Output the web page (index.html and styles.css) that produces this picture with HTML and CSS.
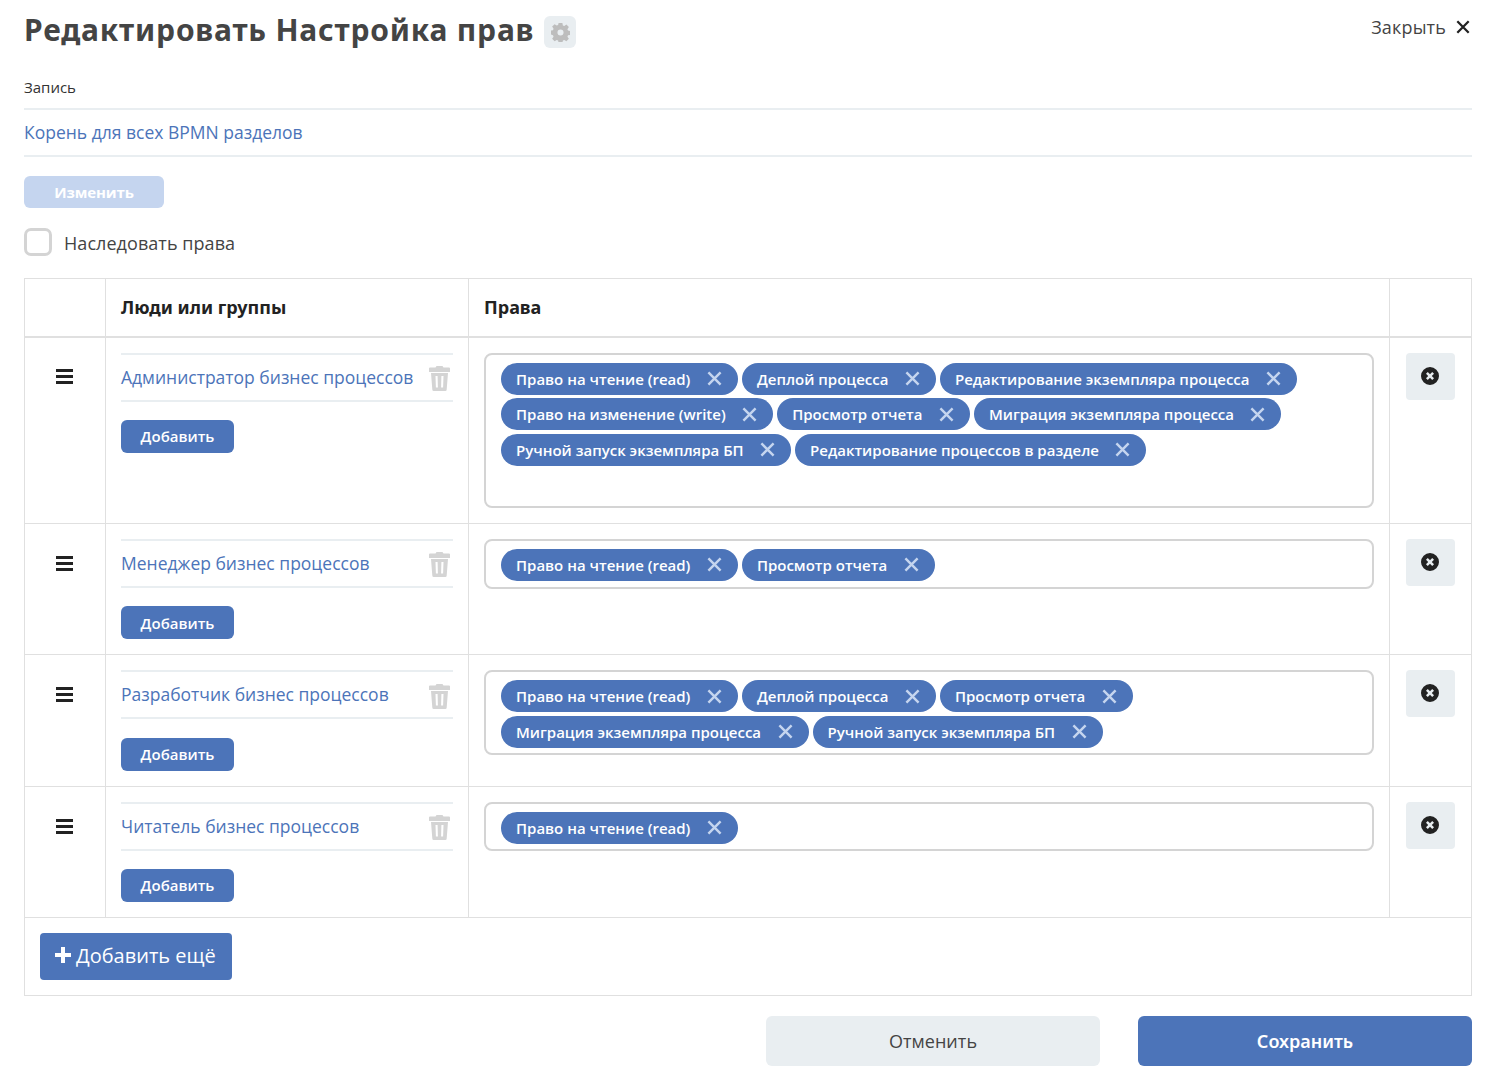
FILE: index.html
```html
<!DOCTYPE html>
<html lang="ru">
<head>
<meta charset="utf-8">
<title>Редактировать Настройка прав</title>
<link rel="stylesheet" href="styles.css">
</head>
<body>
<svg class="defs" width="0" height="0" aria-hidden="true">
  <symbol id="x" viewBox="0 0 16 16"><path d="M1.500 1.500l13 13M14.500 1.500l-13 13" fill="none" stroke="currentColor" stroke-width="2.600"/></symbol>
  <symbol id="trash" viewBox="0 0 21 25"><path fill="currentColor" fill-rule="evenodd" d="M7.500 0h6l1 1.500H20a1 1 0 0 1 1 1V6H0V2.500a1 1 0 0 1 1-1h5.500zM2 7h17l-1.300 16.500a1.500 1.500 0 0 1-1.500 1.500H4.800a1.500 1.500 0 0 1-1.500-1.500zM6.500 10l.4 11.500h2L8.600 10zM12.400 10l-.3 11.500h2l.4-11.500z"/></symbol>
  <symbol id="bars" viewBox="0 0 17 15"><path fill="currentColor" d="M0 0h17v3H0zM0 6h17v3H0zM0 12h17v3H0z"/></symbol>
  <symbol id="xc" viewBox="0 0 18 18"><path fill="currentColor" fill-rule="evenodd" d="M9 0a9 9 0 1 1 0 18A9 9 0 0 1 9 0zM5 6.800L7.200 9 5 11.200 6.800 13 9 10.800 11.200 13l1.800-1.800L10.800 9 13 6.800 11.200 5 9 7.200 6.800 5z"/></symbol>
  <symbol id="gear" viewBox="0 0 20 20"><path fill="currentColor" fill-rule="evenodd" d="M8 0h4l.5 2.600 1.500.6 2.200-1.500 2.600 2.600-1.500 2.200.6 1.500 2.600.5v4l-2.600.5-.6 1.500 1.500 2.200-2.600 2.600-2.200-1.500-1.500.6-.5 2.600H8l-.5-2.600-1.500-.6-2.200 1.500-2.600-2.600 1.500-2.200-.6-1.500L-.5 12V8l2.600-.5.6-1.500-1.500-2.200 2.600-2.600 2.200 1.500 1.500-.6zM10 6.800a3.200 3.200 0 1 0 0 6.400 3.200 3.200 0 0 0 0-6.400z"/></symbol>
  <symbol id="plus" viewBox="0 0 16 16"><path fill="currentColor" d="M6 0h4v6h6v4h-6v6H6v-6H0V6h6z"/></symbol>
</svg>

<header class="top">
  <div class="title-group">
    <h1 class="title">Редактировать Настройка прав</h1>
    <span class="gear-box"><svg class="gear"><use href="#gear"/></svg></span>
  </div>
  <a class="close">Закрыть <svg class="close-x"><use href="#x"/></svg></a>
</header>

<div class="record-label">Запись</div>
<div class="record-value">Корень для всех BPMN разделов</div>
<button class="btn-change">Изменить</button>
<label class="inherit"><span class="checkbox"></span><span class="inherit-text">Наследовать права</span></label>

<table class="grid">
  <colgroup><col class="c1"><col class="c2"><col class="c3"><col class="c4"></colgroup>
  <thead>
    <tr><th></th><th>Люди или группы</th><th>Права</th><th></th></tr>
  </thead>
  <tbody>
    <tr>
      <td class="drag"><svg class="bars"><use href="#bars"/></svg></td>
      <td class="who">
        <div class="person"><span>Администратор бизнес процессов</span><svg class="trash"><use href="#trash"/></svg></div>
        <button class="btn-add">Добавить</button>
      </td>
      <td class="rights">
        <div class="chips">
          <span class="chip">Право на чтение (read)<svg class="chip-x"><use href="#x"/></svg></span>
          <span class="chip">Деплой процесса<svg class="chip-x"><use href="#x"/></svg></span>
          <span class="chip">Редактирование экземпляра процесса<svg class="chip-x"><use href="#x"/></svg></span>
          <span class="chip">Право на изменение (write)<svg class="chip-x"><use href="#x"/></svg></span>
          <span class="chip">Просмотр отчета<svg class="chip-x"><use href="#x"/></svg></span>
          <span class="chip">Миграция экземпляра процесса<svg class="chip-x"><use href="#x"/></svg></span>
          <span class="chip">Ручной запуск экземпляра БП<svg class="chip-x"><use href="#x"/></svg></span>
          <span class="chip">Редактирование процессов в разделе<svg class="chip-x"><use href="#x"/></svg></span>
          <span class="chip-input"></span>
        </div>
      </td>
      <td class="act"><button class="btn-del"><svg class="xc"><use href="#xc"/></svg></button></td>
    </tr>
    <tr>
      <td class="drag"><svg class="bars"><use href="#bars"/></svg></td>
      <td class="who">
        <div class="person"><span>Менеджер бизнес процессов</span><svg class="trash"><use href="#trash"/></svg></div>
        <button class="btn-add">Добавить</button>
      </td>
      <td class="rights">
        <div class="chips">
          <span class="chip">Право на чтение (read)<svg class="chip-x"><use href="#x"/></svg></span>
          <span class="chip">Просмотр отчета<svg class="chip-x"><use href="#x"/></svg></span>
        </div>
      </td>
      <td class="act"><button class="btn-del"><svg class="xc"><use href="#xc"/></svg></button></td>
    </tr>
    <tr>
      <td class="drag"><svg class="bars"><use href="#bars"/></svg></td>
      <td class="who">
        <div class="person"><span>Разработчик бизнес процессов</span><svg class="trash"><use href="#trash"/></svg></div>
        <button class="btn-add">Добавить</button>
      </td>
      <td class="rights">
        <div class="chips">
          <span class="chip">Право на чтение (read)<svg class="chip-x"><use href="#x"/></svg></span>
          <span class="chip">Деплой процесса<svg class="chip-x"><use href="#x"/></svg></span>
          <span class="chip">Просмотр отчета<svg class="chip-x"><use href="#x"/></svg></span>
          <span class="chip">Миграция экземпляра процесса<svg class="chip-x"><use href="#x"/></svg></span>
          <span class="chip">Ручной запуск экземпляра БП<svg class="chip-x"><use href="#x"/></svg></span>
        </div>
      </td>
      <td class="act"><button class="btn-del"><svg class="xc"><use href="#xc"/></svg></button></td>
    </tr>
    <tr>
      <td class="drag"><svg class="bars"><use href="#bars"/></svg></td>
      <td class="who">
        <div class="person"><span>Читатель бизнес процессов</span><svg class="trash"><use href="#trash"/></svg></div>
        <button class="btn-add">Добавить</button>
      </td>
      <td class="rights">
        <div class="chips">
          <span class="chip">Право на чтение (read)<svg class="chip-x"><use href="#x"/></svg></span>
        </div>
      </td>
      <td class="act"><button class="btn-del"><svg class="xc"><use href="#xc"/></svg></button></td>
    </tr>
  </tbody>
  <tfoot>
    <tr><td colspan="4" class="foot"><button class="btn-more"><svg class="plus"><use href="#plus"/></svg>Добавить ещё</button></td></tr>
  </tfoot>
</table>

<footer class="actions">
  <button class="btn-cancel">Отменить</button>
  <button class="btn-save">Сохранить</button>
</footer>
</body>
</html>
```

FILE: styles.css
```css
* { box-sizing: border-box; }
html, body { margin: 0; }
body {
  padding: 0 21px 9px 24px;
  font-family: "Open Sans", "Noto Sans", sans-serif;
  color: #444;
  background: #fff;
}
button { font-family: inherit; border: 0; cursor: pointer; }
.defs { position: absolute; }

.top { display: flex; justify-content: space-between; align-items: flex-start; height: 76px; padding-top: 11px; }
.title-group { display: flex; align-items: flex-start; gap: 10px; }
.title { margin: 0; font-family: "Noto Sans", sans-serif; font-size: 30px; line-height: 38px; font-weight: 700; letter-spacing: .8px; color: #444; }
.gear-box { display: flex; align-items: center; justify-content: center; width: 32px; height: 32px; margin-top: 5px; border-radius: 6px; background: #e9eef1; }
.gear { width: 19px; height: 19px; color: #bdbdbd; overflow: visible; }
.close { display: flex; align-items: center; gap: 9px; height: 36px; margin-top: -2px; margin-right: 2px; font-size: 18px; letter-spacing: .15px; color: #444; }
.close-x { width: 14px; height: 14px; color: #222; margin-left: 1px; }

.record-label { height: 34px; font-size: 15px; line-height: 22px; border-bottom: 2px solid #e9eef1; color: #333; }
.record-value { height: 47px; font-size: 17.500px; line-height: 45px; color: #4c74b9; border-bottom: 2px solid #e9eef1; }
.btn-change { display: block; width: 140px; height: 32px; margin-top: 19px; border-radius: 6px; background: #c5d5ef; color: #fff; font-size: 15px; font-weight: 700; letter-spacing: -.1px; }
.inherit { display: flex; align-items: center; gap: 12px; margin-top: 20px; height: 28px; font-size: 18px; color: #444; }
.inherit-text { padding-top: 2px; letter-spacing: .06px; }
.checkbox { width: 28px; height: 28px; border: 3px solid #d4d4d4; border-radius: 7px; }

.grid { width: 1447px; margin-top: 22px; border-collapse: collapse; table-layout: fixed; }
.c1 { width: 81px; }
.c2 { width: 363px; }
.c3 { width: 921px; }
.c4 { width: 82px; }
.grid th, .grid td { border: 1px solid #e0e0e0; vertical-align: top; padding: 15px; }
.grid th { height: 58px; padding: 0 15px; vertical-align: middle; text-align: left; font-family: "Noto Sans", sans-serif; font-size: 18px; font-weight: 700; color: #222; border-bottom-width: 2px; }
.drag { text-align: center; }
.grid td.drag { padding: 32px 0 0; }
.grid tbody tr:first-child td.drag { padding-top: 31px; }
.bars { display: block; width: 17px; height: 15px; margin: 0 auto 0 31px; color: #222; }

.person { display: flex; align-items: center; justify-content: space-between; height: 49px; padding-right: 4px; border-top: 2px solid #e9eef1; border-bottom: 2px solid #e9eef1; font-size: 17.500px; line-height: 24px; color: #4c74b9; }
.person span { margin-top: -1px; }
.trash { width: 21px; height: 25px; color: #d4d4d4; margin: 3px -1px 0 0; }
.btn-add { display: block; width: 113px; height: 33px; margin-top: 18.330px; border-radius: 6px; background: #4c74b9; color: #fff; font-size: 15px; font-weight: 600; }

.chips { display: flex; flex-wrap: wrap; align-content: flex-start; gap: 3.500px 4px; padding: 8px 15px 5.600px; border: 2px solid #d4d4d4; border-radius: 8px; }
.chip { display: inline-flex; align-items: center; gap: 16.500px; height: 32px; padding: 0 16px 0 15px; border-radius: 16px; background: #4c74b9; color: #fff; font-size: 15px; font-weight: 600; white-space: nowrap; }
.chip-x { width: 15px; height: 15px; color: #c5d5ef; }
.chip-input { width: 100%; height: 31.400px; }

.btn-del { display: flex; align-items: center; justify-content: center; width: 49px; height: 47px; padding: 0; border-radius: 4px; background: #e9eef1; }
.grid td.act { padding: 15px 16px; }
.xc { width: 18px; height: 18px; color: #222; margin: -1px 2px 0 0; }

.btn-more { display: flex; align-items: center; gap: 5px; width: 192px; height: 47px; padding: 0 0 2px 15px; border-radius: 4px; background: #4c74b9; color: #fff; font-size: 20px; }
.plus { width: 16px; height: 16px; }

.actions { display: flex; justify-content: flex-end; gap: 38px; margin-top: 20px; }
.btn-cancel, .btn-save { width: 334px; height: 50px; border-radius: 6px; font-size: 18px; }
.btn-cancel { background: #e9eef1; color: #444; letter-spacing: .05px; }
.btn-save { font-family: "Noto Sans", sans-serif; background: #4c74b9; color: #fff; font-weight: 600; }
```
